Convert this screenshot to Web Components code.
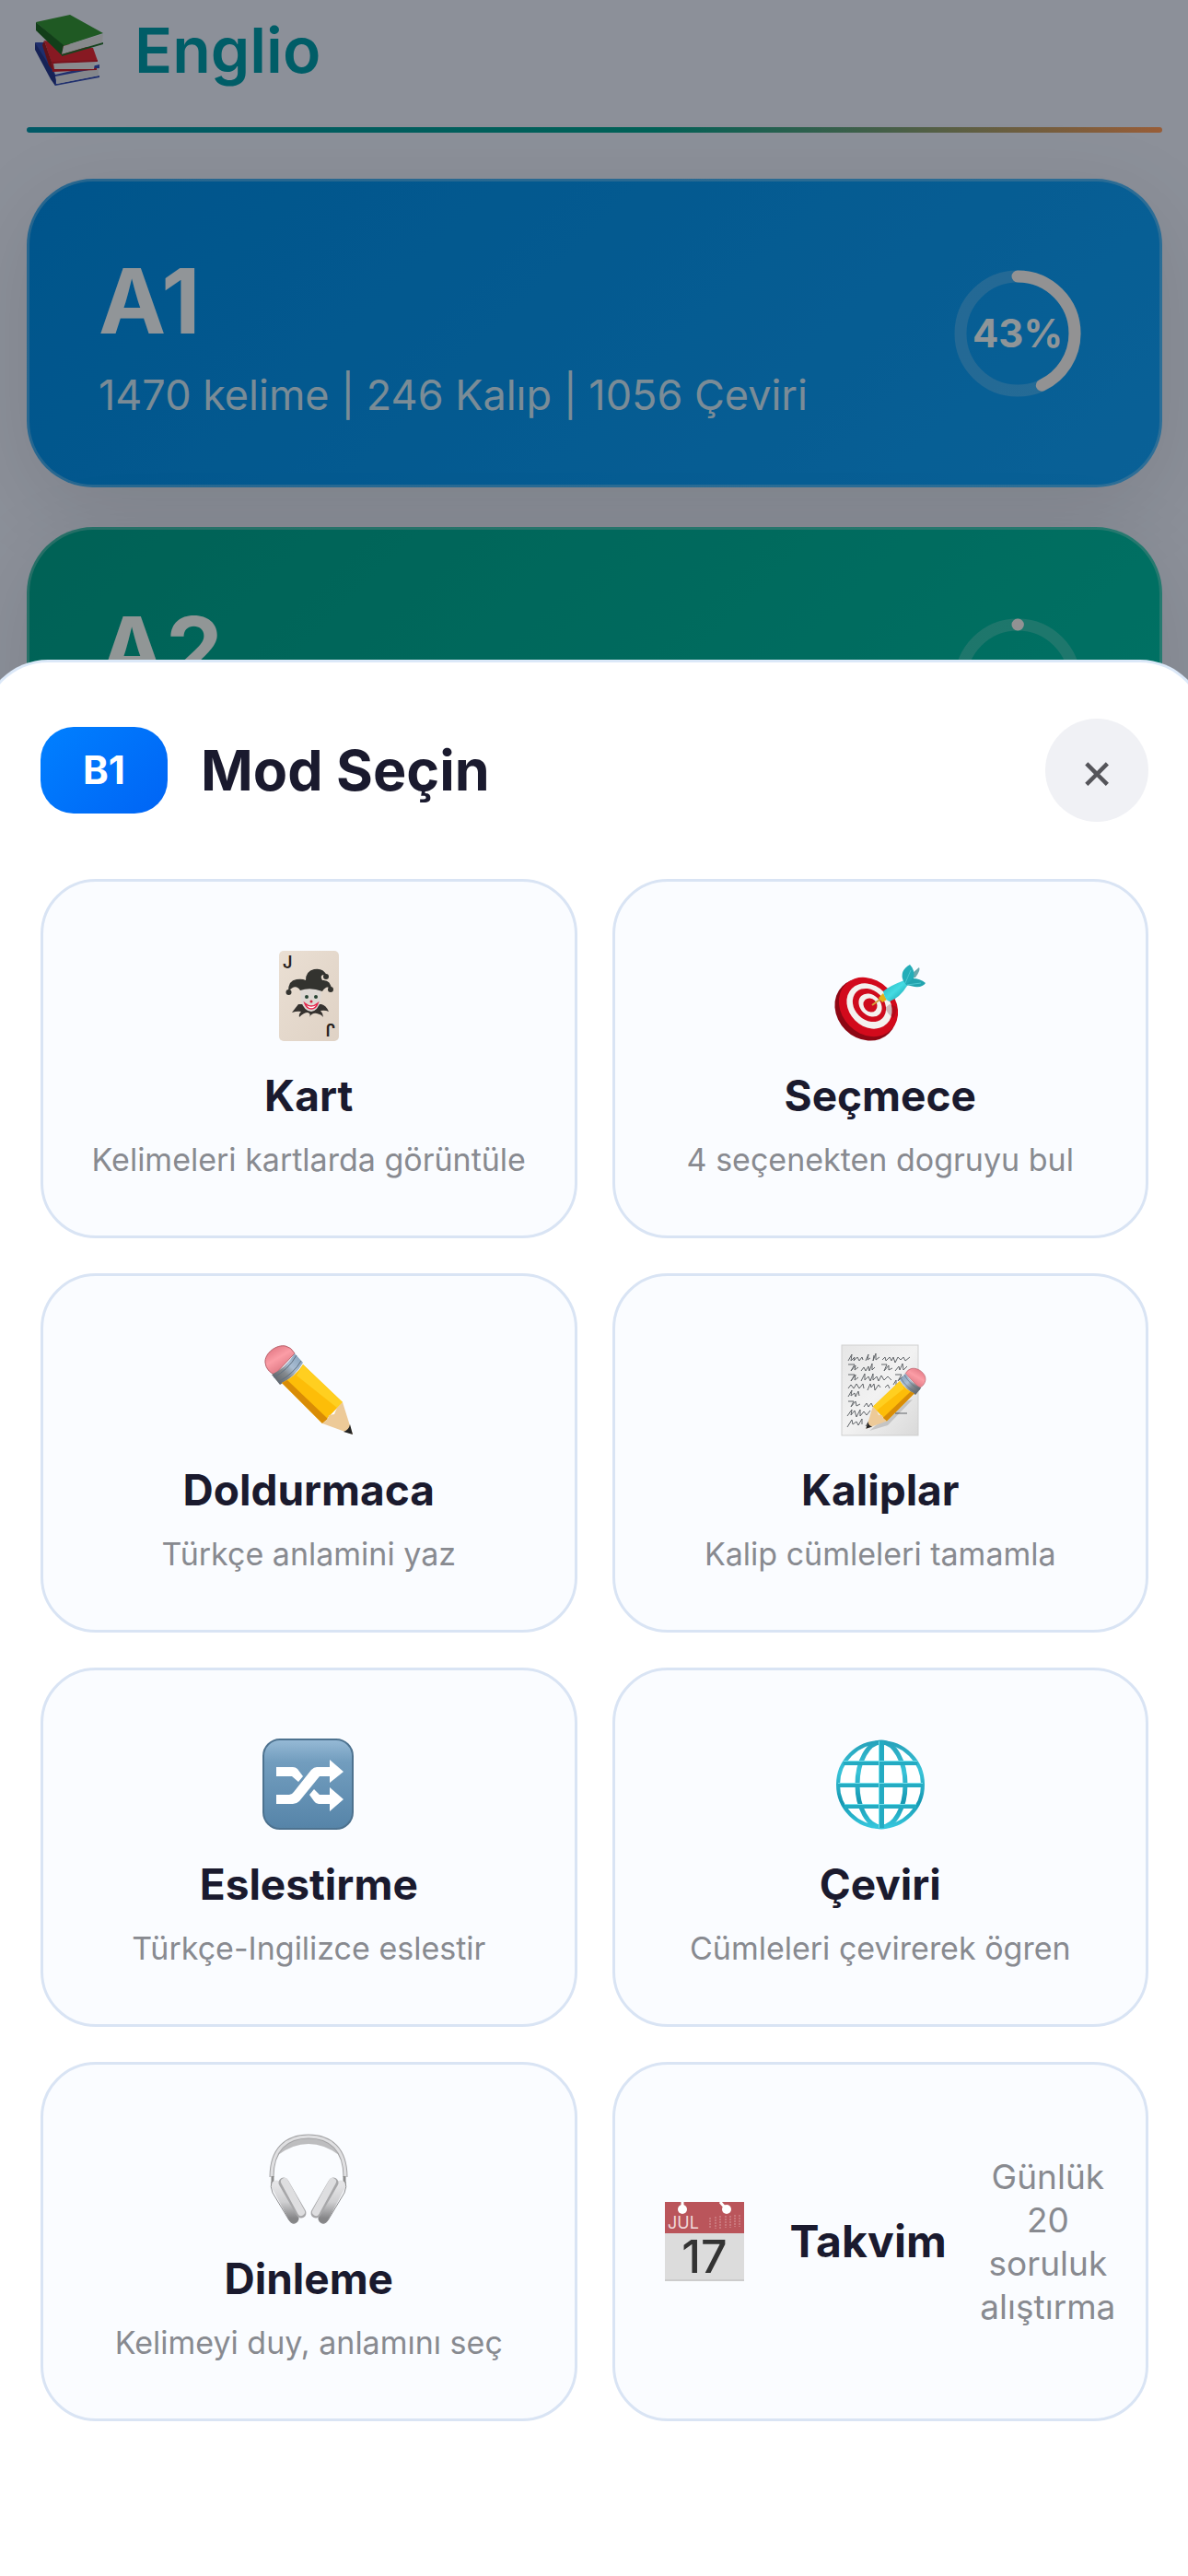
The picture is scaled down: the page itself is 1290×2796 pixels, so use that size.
<!DOCTYPE html>
<html lang="tr">
<head>
  <meta charset="UTF-8">
  <meta name="viewport" content="width=device-width, initial-scale=1.0">
  <title>Englio</title>
  <style>
    :root {
      --ink: #1a1a2e;
      --muted: #888a90;
      --card-bg: #fafcff;
      --card-border: #d9e4f4;
      --brand: #009bac;
    }
    body {
      margin: 0;
      min-height: 100vh;
      background: #e9f0ff;
      font-family: Inter, "Liberation Sans", sans-serif;
      color: var(--ink);
    }
  </style>
</head>
<body>
  <home-screen>
    <level-card name="A1" info="1470 kelime | 246 Kalıp | 1056 Çeviri" percent="43" from="#008de8" to="#10a2fc"></level-card>
    <level-card name="A2" percent="0" from="#00a28f" to="#00bfa8"></level-card>
  </home-screen>

  <mode-sheet level="B1">
    <span slot="title">Mod Seçin</span>
    <mode-card icon="joker">Kart<span slot="info">Kelimeleri kartlarda görüntüle</span></mode-card>
    <mode-card icon="target">Seçmece<span slot="info">4 seçenekten dogruyu bul</span></mode-card>
    <mode-card icon="pencil">Doldurmaca<span slot="info">Türkçe anlamini yaz</span></mode-card>
    <mode-card icon="memo">Kaliplar<span slot="info">Kalip cümleleri tamamla</span></mode-card>
    <mode-card icon="shuffle">Eslestirme<span slot="info">Türkçe-Ingilizce eslestir</span></mode-card>
    <mode-card icon="globe">Çeviri<span slot="info">Cümleleri çevirerek ögren</span></mode-card>
    <mode-card icon="headphones">Dinleme<span slot="info">Kelimeyi duy, anlamını seç</span></mode-card>
    <mode-card icon="calendar" row>Takvim<span slot="info">Günlük 20 soruluk alıştırma</span></mode-card>
  </mode-sheet>

  <script>
    // pencil pointing down right, shared by two icons
    const pencil = /*html*/`
      <path d="M3 20C2 10 15 0 25 2Q31 3 35 10L13 33Q4 29 3 20Z" fill="url(#rubber)" stroke="#b8606a"/>
      <path d="M10 33Q25 26 35 10L44 20Q36 35 19 44Z" fill="url(#ferrule)"/>
      <path d="M12 36Q28 28 37 12M17 41Q34 32 42 18" fill="none" stroke="#5f7080" stroke-width="1"/>
      <path d="M21 42Q36 35 44 22L87 63L65 86Z" fill="#fdbd08"/>
      <path d="M21 42L27 39L71 81L65 86Z" fill="#d98c06"/>
      <path d="M37 34L44 22L87 63L81 69Z" fill="#ffcf20"/>
      <path d="M87 63L98 98L65 86L71 81L72 77L78 76L81 69Z" fill="#edca98"/>
      <path d="M95 87L98 98L88 95Q94 93 95 87Z" fill="#242424"/>`;

    const pencilDefs = /*html*/`
      <linearGradient id="rubber" x1="0" y1="0" x2="0.6" y2="1"><stop stop-color="#d96a78"/><stop offset="0.5" stop-color="#fb9da6"/><stop offset="1" stop-color="#d9707c"/></linearGradient>
      <linearGradient id="ferrule" x1="0" y1="1" x2="1" y2="0"><stop stop-color="#51565c"/><stop offset="0.4" stop-color="#84898e"/><stop offset="0.6" stop-color="#a9bdd2"/><stop offset="1" stop-color="#7f9cb8"/></linearGradient>`;

    const earCup = /*html*/`
      <path d="M11 47V56" stroke="#8c8c8c" stroke-width="3"/>
      <path d="M15 57L34 93" stroke="url(#cup)" stroke-width="11" stroke-linecap="round"/>
      <path d="M10 53Q8 58 11 65L29 95Q33 100 37 97" fill="none" stroke="#8e8e90" stroke-width="1"/>
      <path d="M23 54L42 87" stroke="#a7a7a9" stroke-width="11" stroke-linecap="round"/>
      <path d="M24 53L42 86" stroke="#dedee0" stroke-width="8" stroke-linecap="round"/>`;

    const icons = {
      books: /*html*/`
        <svg viewBox="0 0 78 78" aria-hidden="true">
          <path d="M2 31L12 31L24 66L72 55L72 59L25 70L25 76L72 67L72 69L24 78Z" fill="#344fb8"/>
          <path d="M2 31L24 67V78L19 71L2 39Z" fill="#263a90"/>
          <path d="M24 68L71 59V67L26 76Z" fill="#dde2ea"/>
          <path d="M12 29L65 37L70 51L20 53Z" fill="#e22b39"/>
          <path d="M12 29L20 52L22 62L17 56L10 34Z" fill="#9f202b"/>
          <path d="M20 52L70 50V52L23 54L23 60L69 59V61L21 63Z" fill="#c92131"/>
          <path d="M22 54L67 53L66 60L23 60Z" fill="#e5e8ed"/>
          <path d="M3 9L40 1L76 21L33 35Z" fill="#34943b"/>
          <path d="M3 9L33 34L31 45L3 18Z" fill="#1f682a"/>
          <path d="M33 35L76 22L75 31L31 44Z" fill="#e1e5ea"/>
          <path d="M31 44L76 31V33L31 46Z" fill="#256f32"/>
        </svg>`,

      joker: /*html*/`
        <svg viewBox="0 0 100 100" aria-hidden="true">
          <defs><linearGradient id="paper" x1="0" y1="0" x2="1" y2="1"><stop stop-color="#eadfd3"/><stop offset="1" stop-color="#dfd2c5"/></linearGradient></defs>
          <rect x="18" y="1" width="65" height="98" rx="5" fill="url(#paper)"/>
          <text x="22" y="20" font-family="Inter, sans-serif" font-size="18" font-weight="600" fill="#28221e">J</text>
          <text x="22" y="20" font-family="Inter, sans-serif" font-size="18" font-weight="600" fill="#28221e" transform="rotate(180 50.500 50)">J</text>
          <path d="M39 59Q35 64 32 68Q38 66 42 67Q39 70 40 73Q45 68 49 68Q53 69 51 73Q54 68 59 69Q64 70 66 73Q66 69 63 66Q68 65 72 67Q69 60 64 59Z" fill="#35322f"/>
          <path d="M41 42H64L63 56Q60 66 53 67Q45 66 42 56Z" fill="#ddd8d4"/>
          <path d="M46 58Q53 64 60 58Q58 64 53 64Q48 64 46 58Z" fill="#fff" stroke="#e5264c" stroke-width="1.500"/>
          <circle cx="48" cy="51" r="2" fill="#274434"/><circle cx="58" cy="51" r="2" fill="#274434"/>
          <circle cx="53" cy="56" r="1.500" fill="#d4203c"/>
          <path d="M28 45Q28 33 37 32Q43 31 47 33Q47 23 56 21Q66 19 70 28L66 27Q62 28 65 33Q74 32 75 43Q70 37 65 45Q52 40 41 44Q36 36 28 45Z" fill="#33332f"/>
          <circle cx="28.500" cy="46" r="3" fill="#33332f"/><circle cx="74" cy="43" r="3" fill="#33332f"/><circle cx="69" cy="29" r="3" fill="#33332f"/>
        </svg>`,

      target: /*html*/`
        <svg viewBox="0 0 100 100" aria-hidden="true">
          <defs><linearGradient id="dart" x1="0" y1="0" x2="1" y2="1"><stop stop-color="#1fb3bd"/><stop offset="0.5" stop-color="#45dbe2"/><stop offset="1" stop-color="#0d98a4"/></linearGradient></defs>
          <ellipse cx="34" cy="65" rx="36" ry="31" transform="rotate(45 34 65)" fill="#8d0714"/>
          <ellipse cx="37" cy="62" rx="35" ry="29" transform="rotate(45 37 62)" fill="#d20a1c"/>
          <ellipse cx="38" cy="61" rx="27" ry="22" transform="rotate(45 38 61)" fill="#f4f2ef"/>
          <ellipse cx="38" cy="60" rx="20" ry="16" transform="rotate(45 38 60)" fill="#ce0b1d"/>
          <ellipse cx="39" cy="60" rx="14" ry="11" transform="rotate(45 39 60)" fill="#f4f2ef"/>
          <ellipse cx="39" cy="60" rx="8" ry="7" transform="rotate(45 39 60)" fill="#ce0b1d"/>
          <path d="M60 59L68 62Q67 70 64 74Q58 70 55 63Z" fill="#5b0d16" opacity="0.25"/>
          <path d="M41 60L52 52" stroke="#d2a13a" stroke-width="2"/>
          <path d="M48 52L53 47L57 54L52 57Z" fill="#e4b21a"/>
          <path d="M78 31L92 19Q94 22 88 30Z" fill="#6ba9ae"/>
          <path d="M53 45Q60 39 76 33L79 39Q71 52 60 56Q55 55 53 45Z" fill="url(#dart)"/>
          <path d="M75 34Q70 23 82 16Q88 22 86 31L79 39Z" fill="#24adb8"/>
          <path d="M78 38L85 31Q93 31 99 36Q96 41 87 40Z" fill="#22a4af"/>
          <path d="M77 36L83 22M79 38L94 36" stroke="#4cc6cf" stroke-width="1"/>
        </svg>`,

      pencil: /*html*/`
        <svg viewBox="0 0 100 100" aria-hidden="true"><defs>${pencilDefs}</defs>${pencil}</svg>`,

      memo: /*html*/`
        <svg viewBox="0 0 100 100" aria-hidden="true">
          <defs>${pencilDefs}<linearGradient id="sheet" x1="0" y1="0" x2="1" y2="1"><stop stop-color="#e6e6e6"/><stop offset="0.5" stop-color="#f2f2f2"/><stop offset="1" stop-color="#d9d9d9"/></linearGradient></defs>
          <rect x="8" y="1" width="83" height="98" fill="url(#sheet)" stroke="#cfcfcf"/>
          <g fill="none" stroke="#606468" stroke-width="1" stroke-linejoin="round">
            <path d="M15 18L19 11L18 18L22 14L21 18L25 14L27 18L30 14L31 17M34 18L37 11L36 17L39 15M43 12L42 18L45 10L45 17L49 14M52 17L55 14L56 18L60 14L62 18L64 14L66 20L69 14L72 17L75 14L77 18L82 14"/>
            <path d="M15 22H22L18 29L23 23L22 28L26 25M29 29L32 25L34 29L37 24L38 29L41 21L41 28L44 25M51 22H57L54 29L59 23L59 28L63 26M66 29L70 24L71 28L74 21L75 28L79 24"/>
            <path d="M15 33H22L18 40L23 33L22 39L26 36M29 40L33 32L33 39L37 35L39 40L42 32L42 39L46 35L48 40L51 34L54 39L58 35L62 39M66 33H73L69 40L74 35"/>
            <path d="M15 48L18 44L21 48L24 43L27 48L31 43L32 48M36 50L39 43L40 47L43 43L44 50L48 44L50 47M55 47L58 44L60 48M64 44L67 39L67 47"/>
            <path d="M15 57L19 50L18 56L22 53L23 57L26 51L27 56M15 62H21L18 68L23 62L24 67L28 65M32 68L35 64L37 68L40 64L42 68M47 64L49 68L52 62L53 67"/>
            <path d="M14 78L19 71L18 77L22 72L24 79L28 71L28 78L32 73L35 77L39 72M14 90L19 82L20 87L24 84L26 88L30 81L30 87M34 89L38 83M66 75H79"/>
          </g>
          <path d="M38 94L58 88L85 60L76 62Z" fill="#000" opacity="0.15"/>
          <g transform="translate(101 25) scale(-0.680 0.680)">${pencil}</g>
        </svg>`,

      shuffle: /*html*/`
        <svg viewBox="0 0 100 100" aria-hidden="true">
          <defs><linearGradient id="tile" x1="0" y1="0" x2="0" y2="1"><stop stop-color="#96bad6"/><stop offset="0.25" stop-color="#729dbe"/><stop offset="0.65" stop-color="#6390b3"/><stop offset="1" stop-color="#5684a8"/></linearGradient></defs>
          <rect x="1" y="1" width="97" height="97" rx="18" fill="url(#tile)" stroke="#4d728f" stroke-width="2"/>
          <path d="M15 31H33Q36 31 38 33L44 41L39 47L32 41H15Z" fill="#fff"/>
          <path d="M15 61H29Q32 61 34 58L53 34Q56 31 59 31H73V23L88 36L73 48V41H62L40 68Q37 71 33 71H15Z" fill="#fff"/>
          <path d="M51 61L56 55L62 61H73V53L88 66L73 79V71H61Q58 71 56 68Z" fill="#fff"/>
        </svg>`,

      globe: /*html*/`
        <svg viewBox="0 0 100 100" aria-hidden="true">
          <defs><linearGradient id="wire" x1="0" y1="0" x2="0" y2="1"><stop stop-color="#27a3bb"/><stop offset="0.35" stop-color="#38c3d8"/><stop offset="0.7" stop-color="#1598b2"/><stop offset="1" stop-color="#35c6dc"/></linearGradient></defs>
          <circle cx="50" cy="50" r="46" fill="#fff" stroke="url(#wire)" stroke-width="4"/>
          <ellipse cx="51" cy="50" rx="26" ry="46" fill="none" stroke="url(#wire)" stroke-width="5"/>
          <g fill="#24abc2">
            <rect x="48" y="3" width="6" height="94"/>
            <rect x="4" y="48" width="92" height="5"/>
            <rect x="10" y="24" width="80" height="5"/>
            <rect x="11" y="71" width="78" height="5"/>
          </g>
          <g fill="#72e0ec">
            <rect x="48" y="3" width="1" height="94"/>
            <rect x="4" y="48" width="92" height="1"/>
            <rect x="10" y="24" width="80" height="1"/>
            <rect x="11" y="71" width="78" height="1"/>
          </g>
        </svg>`,

      headphones: /*html*/`
        <svg viewBox="0 0 100 100" aria-hidden="true">
          <defs><linearGradient id="cup" x1="0" y1="0" x2="0" y2="1"><stop stop-color="#e4e4e6"/><stop offset="0.5" stop-color="#cfcfd1"/><stop offset="1" stop-color="#858587"/></linearGradient></defs>
          <path d="M17 24Q29 4 50 4T83 24Q67 12 50 12T17 24Z" fill="#bdbdbf"/>
          <path d="M10 48C10 18 26 4 50 4S90 18 90 48" fill="none" stroke="#a3a3a5" stroke-width="5"/>
          <path d="M10 48C10 18 26 4 50 4S90 18 90 48" fill="none" stroke="#dfdfe1" stroke-width="3"/>
          ${earCup}
          <g transform="translate(100 0) scale(-1 1)">${earCup}</g>
        </svg>`,

      calendar: /*html*/`
        <svg viewBox="0 0 86 86" aria-hidden="true">
          <rect width="86" height="86" fill="#dcdcdc"/>
          <rect width="86" height="34" fill="#ba555b"/>
          <path d="M0 84H86V86H0Z" fill="#cccccc"/>
          <path d="M19 0V8M60 0L66 7" stroke="#fff" stroke-width="3"/>
          <circle cx="19" cy="8" r="5" fill="#fff"/><circle cx="67" cy="8" r="5" fill="#fff"/>
          <path d="M49 17V29M55 16V29M60 15V29M66 15V28M71 15V28M76 14V27M81 14V27" stroke="#c9767b" stroke-width="2" stroke-dasharray="2 1"/>
          <text x="3" y="29" font-family="Inter, sans-serif" font-size="18" fill="#f0d9da">JUL</text>
          <text x="43" y="77" text-anchor="middle" font-family="Inter, sans-serif" font-size="50" font-weight="500" fill="#333">17</text>
        </svg>`
    };

    class HomeScreen extends HTMLElement {
      constructor() {
        super();
        this.shadow = this.attachShadow({ mode: 'open' });
      }

      connectedCallback() {
        this.render();
      }

      render() {
        this.shadow.innerHTML =
        /*html*/`
        <style>
          :host {
            display: block;
            padding: 0 28px 0 29px;
          }
          header {
            display: flex;
            align-items: center;
            gap: 32px;
            height: 138px;
            padding: 0 7px 30px;
            box-sizing: border-box;
          }
          svg {
            width: 78px;
            height: 78px;
          }
          h1 {
            margin: 0;
            font-size: 68px;
            line-height: 80px;
            font-weight: 600;
            color: var(--brand);
          }
          .line {
            height: 6px;
            border-radius: 3px;
            background: linear-gradient(90deg, #0095ab, #00a392 55%, #ff9c5c);
          }
          main {
            display: flex;
            flex-direction: column;
            gap: 43px;
            padding-top: 50px;
          }
        </style>
        <header>
          ${icons.books}
          <h1>Englio</h1>
        </header>
        <div class="line"></div>
        <main><slot></slot></main>
        `;
      }
    }

    class LevelCard extends HTMLElement {
      constructor() {
        super();
        this.shadow = this.attachShadow({ mode: 'open' });
      }

      connectedCallback() {
        this.render();
      }

      render() {
        const percent = Number(this.getAttribute('percent'));
        const info = this.getAttribute('info');
        this.shadow.innerHTML =
        /*html*/`
        <style>
          :host {
            display: block;
          }
          article {
            display: flex;
            justify-content: space-between;
            align-items: center;
            min-height: 335px;
            padding: 0 85px 0 75px;
            box-sizing: border-box;
            border: 3px solid rgba(255, 255, 255, 0.25);
            border-radius: 72px;
            background: linear-gradient(135deg, ${this.getAttribute('from')}, ${this.getAttribute('to')}) border-box;
            box-shadow: 0 24px 96px rgba(0, 0, 0, 0.1);
            color: rgba(255, 255, 255, 0.95);
          }
          .text {
            align-self: flex-start;
            padding-top: 70px;
          }
          h2 {
            margin: 0;
            font-size: 98px;
            line-height: 120px;
            font-weight: 700;
          }
          p {
            margin: 15px 0 0;
            font-size: 45px;
            line-height: 54px;
            opacity: 0.85;
          }
          .ring {
            display: grid;
            place-items: center;
            width: 138px;
            height: 138px;
          }
          .ring > * {
            grid-area: 1 / 1;
          }
          circle {
            fill: none;
            stroke: rgba(255, 255, 255, 0.2);
            stroke-width: 13;
          }
          .done {
            stroke: #f4f4f6;
            stroke-linecap: round;
          }
          .ring span {
            font-size: 42px;
            line-height: 48px;
            font-weight: 700;
          }
        </style>
        <article>
          <div class="text">
            <h2>${this.getAttribute('name')}</h2>
            ${info ? `<p>${info}</p>` : ''}
          </div>
          <div class="ring">
            <svg width="138" height="138" viewBox="0 0 138 138" aria-hidden="true">
              <circle cx="69" cy="69" r="62"/>
              <circle class="done" cx="69" cy="69" r="62" pathLength="1000" stroke-dasharray="${Math.max(percent * 10, 1)} 1000" transform="rotate(-90 69 69)"/>
            </svg>
            ${percent ? `<span>${percent}%</span>` : ''}
          </div>
        </article>
        `;
      }
    }

    class ModeSheet extends HTMLElement {
      constructor() {
        super();
        this.shadow = this.attachShadow({ mode: 'open' });
      }

      connectedCallback() {
        this.render();
      }

      render() {
        this.shadow.innerHTML =
        /*html*/`
        <style>
          :host {
            display: flex;
            flex-direction: column;
            justify-content: flex-end;
            position: fixed;
            inset: 0;
            overflow: hidden;
            background: rgba(0, 0, 0, 0.4);
          }
          section {
            margin: 0 -20px;
            padding: 61px 60px 168px 61px;
            border: 3px solid #dbe8f8;
            border-bottom: 0;
            border-radius: 72px 72px 0 0;
            background: #fff;
          }
          header {
            display: flex;
            align-items: center;
            gap: 36px;
            margin-bottom: 62px;
          }
          .level {
            padding: 21px 46px;
            border-radius: 36px;
            background: linear-gradient(135deg, #0080ff, #0064f5);
            color: #fff;
            font-size: 42px;
            line-height: 52px;
            font-weight: 700;
          }
          h2 {
            flex: 1;
            margin: 0;
            font-size: 61px;
            line-height: 74px;
            font-weight: 700;
          }
          button {
            width: 112px;
            height: 112px;
            padding: 0;
            border: 0;
            border-radius: 50%;
            background: #f0f1f5;
            color: #55555a;
            font: 400 56px/112px Inter, sans-serif;
            cursor: pointer;
          }
          .grid {
            display: grid;
            grid-template-columns: 1fr 1fr;
            gap: 38px;
          }
        </style>
        <section role="dialog" aria-labelledby="title">
          <header>
            <span class="level">${this.getAttribute('level')}</span>
            <h2 id="title"><slot name="title"></slot></h2>
            <button type="button" aria-label="Kapat">×</button>
          </header>
          <div class="grid"><slot></slot></div>
        </section>
        `;
        const closeButton = this.shadow.querySelector('button');
        closeButton.addEventListener('click', () => {
          this.remove();
        });
      }
    }

    class ModeCard extends HTMLElement {
      constructor() {
        super();
        this.shadow = this.attachShadow({ mode: 'open' });
      }

      connectedCallback() {
        this.render();
      }

      render() {
        this.shadow.innerHTML =
        /*html*/`
        <style>
          :host {
            display: grid;
            min-width: 0;
          }
          button {
            display: flex;
            flex-direction: column;
            align-items: center;
            justify-content: center;
            min-height: 390px;
            padding: 0 36px;
            border: 3px solid var(--card-border);
            border-radius: 60px;
            background: var(--card-bg);
            color: var(--ink);
            font-family: inherit;
            cursor: pointer;
          }
          .icon {
            display: flex;
            align-items: flex-end;
            justify-content: center;
            width: 114px;
            height: 114px;
            margin-bottom: 30px;
          }
          svg {
            width: 100px;
            height: 100px;
            overflow: visible;
          }
          .name {
            font-size: 46px;
            line-height: 56px;
            font-weight: 700;
          }
          .info {
            margin-top: 18px;
            color: var(--muted);
            font-size: 34px;
            line-height: 47px;
          }
          :host([row]) button {
            flex-direction: row;
            gap: 36px;
            padding: 0 32px 0 40px;
          }
          :host([row]) .icon {
            flex-shrink: 0;
            align-items: center;
            margin: 0;
          }
          :host([row]) svg {
            width: 86px;
            height: 86px;
          }
          :host([row]) .name {
            font-size: 48px;
          }
          :host([row]) .info {
            margin: 0;
            font-size: 37px;
          }
        </style>
        <button type="button">
          <span class="icon">${icons[this.getAttribute('icon')]}</span>
          <span class="name"><slot></slot></span>
          <span class="info"><slot name="info"></slot></span>
        </button>
        `;
      }
    }

    customElements.define('home-screen', HomeScreen);
    customElements.define('level-card', LevelCard);
    customElements.define('mode-sheet', ModeSheet);
    customElements.define('mode-card', ModeCard);
  </script>
</body>
</html>
